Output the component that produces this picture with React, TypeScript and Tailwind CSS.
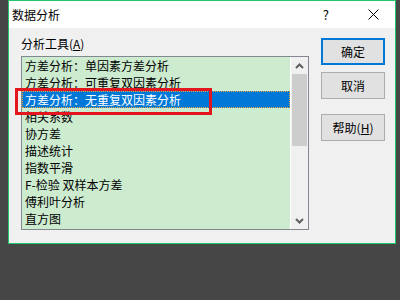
import React from "react";

const items = [
  "方差分析：单因素方差分析",
  "方差分析：可重复双因素分析",
  "方差分析：无重复双因素分析",
  "相关系数",
  "协方差",
  "描述统计",
  "指数平滑",
  "F-检验 双样本方差",
  "傅利叶分析",
  "直方图",
];

const font = { fontFamily: '"Noto Sans CJK SC", "Noto Sans", sans-serif' };

export default function App() {
  return (
    <div className="relative w-[400px] h-[300px] bg-[#464646] overflow-hidden text-[12px] text-black" style={font}>
      <div className="ml-[8px] w-[388px] h-[244px] border border-[#1fc46c] bg-[#f0f0f0] flex flex-col">
        <div className="h-[27px] bg-white flex items-center pl-[3px]">
          <span className="leading-[14px]">数据分析</span>
          <span className="ml-auto mr-[39px] text-[13px]">?</span>
          <svg width="11" height="11" viewBox="0 0 11 11" className="mr-[16px]">
            <path d="M0.5 0.5 L10.5 10.5 M10.5 0.5 L0.5 10.5" stroke="#000" strokeWidth="1" />
          </svg>
        </div>
        <div className="flex flex-1 pl-[12px]">
          <div className="flex flex-col">
            <div className="h-[20px] mt-[6px] leading-[20px]">
              分析工具(<span className="underline">A</span>)
            </div>
            <div className="mt-[2px] w-[288px] h-[174px] border border-[#828790] flex">
              <div className="w-[268px] h-[172px] bg-[#cdebcf] flex flex-col">
                {items.map((t, i) =>
                  i === 2 ? (
                    <div
                      key={i}
                      className="h-[17px] leading-[15px] bg-[#0078d7] text-white border border-dotted border-[#f2a23a] pl-[2px] whitespace-nowrap"
                    >
                      {t}
                    </div>
                  ) : (
                    <div key={i} className="h-[17px] leading-[17px] pl-[3px] whitespace-nowrap">
                      {t}
                    </div>
                  )
                )}
              </div>
              <div className="w-[1px] bg-white" />
              <div className="w-[17px] flex flex-col bg-[#f0f0f0]">
                <div className="h-[17px] flex items-center justify-center">
                  <svg width="9" height="6" viewBox="0 0 9 6">
                    <path d="M1 5 L4.5 1.5 L8 5" fill="none" stroke="#606060" strokeWidth="2" />
                  </svg>
                </div>
                <div className="mx-[1px] h-[72px] bg-[#cdcdcd]" />
                <div className="flex-1" />
                <div className="h-[17px] flex items-center justify-center">
                  <svg width="9" height="6" viewBox="0 0 9 6">
                    <path d="M1 1 L4.5 4.5 L8 1" fill="none" stroke="#606060" strokeWidth="2" />
                  </svg>
                </div>
              </div>
            </div>
          </div>
          <div className="ml-[12px] pt-[10px] flex flex-col">
            <div className="w-[64px] h-[27px] border-2 border-[#0078d7] bg-[#e1e1e1] flex items-center justify-center">
              确定
            </div>
            <div className="mt-[7px] w-[64px] h-[27px] border border-[#adadad] bg-[#e1e1e1] flex items-center justify-center">
              取消
            </div>
            <div className="mt-[15px] w-[64px] h-[27px] border border-[#adadad] bg-[#e1e1e1] flex items-center justify-center">
              帮助(<span className="underline">H</span>)
            </div>
          </div>
        </div>
      </div>
      <div className="absolute left-[15px] top-[88px] w-[197px] h-[27px] border-[3px] border-[#e3161e]" />
    </div>
  );
}
